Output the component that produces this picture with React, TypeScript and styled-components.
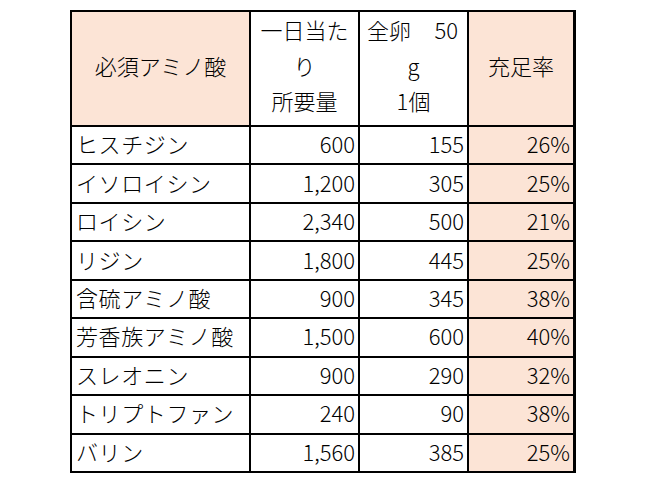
import React from "react";
import styled, { createGlobalStyle, css } from "styled-components";

interface AminoRow {
  name: string;
  required: string;
  egg: string;
  ratio: string;
}

const rows: AminoRow[] = [
  { name: "ヒスチジン", required: "600", egg: "155", ratio: "26%" },
  { name: "イソロイシン", required: "1,200", egg: "305", ratio: "25%" },
  { name: "ロイシン", required: "2,340", egg: "500", ratio: "21%" },
  { name: "リジン", required: "1,800", egg: "445", ratio: "25%" },
  { name: "含硫アミノ酸", required: "900", egg: "345", ratio: "38%" },
  { name: "芳香族アミノ酸", required: "1,500", egg: "600", ratio: "40%" },
  { name: "スレオニン", required: "900", egg: "290", ratio: "32%" },
  { name: "トリプトファン", required: "240", egg: "90", ratio: "38%" },
  { name: "バリン", required: "1,560", egg: "385", ratio: "25%" },
];

const peach = "#fce4d6";

const GlobalStyle = createGlobalStyle`
  html, body {
    margin: 0;
    padding: 0;
    background: #ffffff;
  }
  body {
    font-family: "Noto Sans CJK JP", "Noto Sans", sans-serif;
    font-weight: 300;
    color: #000000;
  }
`;

const Page = styled.div`
  width: 648px;
  height: 483px;
  box-sizing: border-box;
  padding: 10px 0 0 70px;
`;

const Sheet = styled.div`
  display: grid;
  grid-template-columns: 177px 107px 107px 104px;
  grid-template-rows: 113px repeat(9, 1fr);
  gap: 2px;
  width: 506px;
  height: 463px;
  box-sizing: border-box;
  padding: 2px 3px 2px 2px;
  background: #000000;
`;

interface CellProps {
  $align?: "left" | "right" | "center";
  $shaded?: boolean;
}

const Cell = styled.div<CellProps>`
  display: flex;
  align-items: center;
  justify-content: ${({ $align }) =>
    $align === "right" ? "flex-end" : $align === "center" ? "center" : "flex-start"};
  background: ${({ $shaded }) => ($shaded ? peach : "#ffffff")};
  font-size: 22px;
  line-height: 1;
  white-space: nowrap;
  overflow: hidden;
  padding-bottom: 4px;
  ${({ $align }) =>
    $align === "right"
      ? css`
          padding-right: 3px;
        `
      : css`
          padding-left: 4px;
          letter-spacing: 0.6px;
        `}
`;

const HeaderCell = styled.div<CellProps>`
  display: flex;
  flex-direction: column;
  justify-content: center;
  align-items: stretch;
  background: ${({ $shaded }) => ($shaded ? peach : "#ffffff")};
  font-size: 22px;
  line-height: 35.5px;
  text-align: center;
  padding-bottom: 6px;
`;

const SplitLine = styled.div`
  display: flex;
  justify-content: space-between;
  padding: 0 9px 0 7px;
`;

function App() {
  return (
    <>
      <GlobalStyle />
      <Page>
        <Sheet>
          <HeaderCell $shaded>
            <div>必須アミノ酸</div>
          </HeaderCell>
          <HeaderCell>
            <div>一日当た</div>
            <div>り</div>
            <div>所要量</div>
          </HeaderCell>
          <HeaderCell>
            <SplitLine>
              <span>全卵</span>
              <span>50</span>
            </SplitLine>
            <div>g</div>
            <div>1個</div>
          </HeaderCell>
          <HeaderCell $shaded>
            <div>充足率</div>
          </HeaderCell>

          {rows.map((row) => (
            <React.Fragment key={row.name}>
              <Cell $align="left">{row.name}</Cell>
              <Cell $align="right">{row.required}</Cell>
              <Cell $align="right">{row.egg}</Cell>
              <Cell $align="right" $shaded>
                {row.ratio}
              </Cell>
            </React.Fragment>
          ))}
        </Sheet>
      </Page>
    </>
  );
}

export default App;
